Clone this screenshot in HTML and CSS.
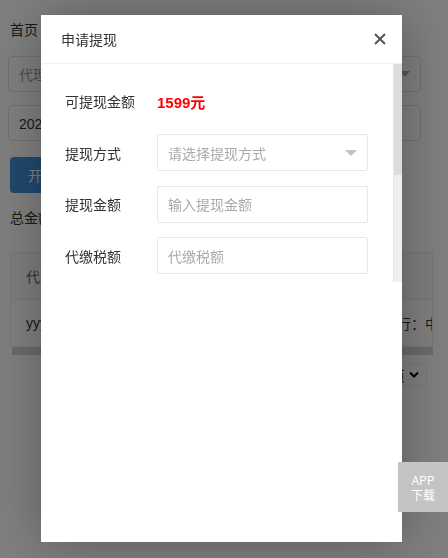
FILE: index.html
```html
<!DOCTYPE html>
<html lang="zh-CN">
<head>
<meta charset="utf-8">
<title>申请提现</title>
<link rel="stylesheet" href="styles.css">
</head>
<body>
<div class="page">
  <div class="crumb">首页</div>
  <div class="field select-lg"><span class="ph">代理商名称</span><span class="caret"></span></div>
  <div class="field date">2021-01-01 至 2021-12-31</div>
  <button class="btn">开始查询</button>
  <div class="total">总金额：1599元</div>
  <div class="table">
    <div class="tr th"><div class="td c1">代理商名称</div></div>
    <div class="tr"><div class="td c1">yyyy-MM-dd HH:mm</div><div class="td c2">开户行：中国银行</div></div>
  </div>
  <div class="hscroll"></div>
  <div class="pager">
    <div class="limit">10 条/页
      <svg class="chev" width="10" height="7" viewBox="0 0 10 7"><path d="M1 1.5 L5 5.5 L9 1.5" fill="none" stroke="#000" stroke-width="2"/></svg>
    </div>
  </div>
</div>

<div class="shade"></div>

<div class="layer">
  <div class="layer-title">
    <span>申请提现</span>
    <svg class="close" width="12" height="12" viewBox="0 0 12 12"><path d="M1 1 L11 11 M11 1 L1 11" stroke="#555" stroke-width="2" fill="none"/></svg>
  </div>
  <div class="layer-body">
    <div class="layer-content">
      <div class="row"><span class="lbl">可提现金额</span><span class="amount">1599元</span></div>
      <div class="row"><span class="lbl">提现方式</span><div class="input select"><span class="ph">请选择提现方式</span><span class="tri"></span></div></div>
      <div class="row"><span class="lbl">提现金额</span><input class="input" placeholder="输入提现金额"></div>
      <div class="row"><span class="lbl">代缴税额</span><input class="input" placeholder="代缴税额"></div>
    </div>
    <div class="vscroll"><div class="thumb"></div></div>
  </div>
</div>

<div class="app-dl">APP<br>下载</div>
</body>
</html>
```

FILE: styles.css
```css
html, body {
  margin: 0;
  padding: 0;
  height: 558px;
  overflow: hidden;
}
body {
  font-family: "Liberation Sans", "Noto Sans CJK SC", sans-serif;
  font-size: 14px;
  color: #333;
  background: #fff;
}

/* underlying page */
.page {
  padding: 20px 0 0 8px;
  width: 440px;
}
.crumb {
  line-height: 20px;
  padding-left: 2px;
}
.field {
  box-sizing: border-box;
  width: 413px;
  height: 36px;
  border: 1px solid #e2e2e2;
  border-radius: 4px;
  padding: 0 10px;
  display: flex;
  align-items: center;
  justify-content: space-between;
}
.select-lg { margin-top: 16px; }
.select-lg .ph { color: #999; }
.caret {
  width: 0; height: 0;
  border: 5px solid transparent;
  border-top: 6px solid #aaa;
  border-bottom: 0;
}
.date { margin-top: 13px; color: #333; }
.btn {
  display: block;
  margin: 16px 0 0 2px;
  height: 36px;
  padding: 0 18px;
  border: 0;
  border-radius: 4px;
  background: #4192dc;
  color: #fff;
  font: inherit;
}
.total {
  margin: 15px 0 0 2px;
  line-height: 20px;
}
.table {
  margin: 24px 0 0 2px;
  width: 423px;
  box-sizing: border-box;
  border: 1px solid #ececec;
  overflow: hidden;
}
.tr {
  display: flex;
  height: 46px;
  align-items: center;
  white-space: nowrap;
}
.tr.th { border-bottom: 1px solid #ececec; background: #fafafa; color: #666; }
.td { padding-left: 15px; box-sizing: border-box; }
.c1 { width: 343px; flex: none; }
.c2 { flex: none; }
.hscroll {
  margin-left: 4px;
  width: 421px;
  height: 8px;
  background: #d6d6d6;
}
.pager {
  display: flex;
  justify-content: flex-end;
  padding-right: 21px;
  margin-top: 8px;
}
.limit {
  box-sizing: border-box;
  height: 23px;
  border: 1px solid #eee;
  border-radius: 2px;
  padding: 0 7px 0 8px;
  display: flex;
  align-items: center;
  gap: 4px;
  font-size: 14px;
}

/* shade and layer */
.shade {
  position: fixed;
  inset: 0;
  background: rgba(0, 0, 0, 0.5);
}
.layer {
  position: fixed;
  left: 41px;
  top: 15px;
  width: 361px;
  height: 527px;
  background: #fff;
  box-shadow: 1px 1px 50px rgba(0, 0, 0, 0.3);
  display: flex;
  flex-direction: column;
}
.layer-title {
  box-sizing: border-box;
  height: 49px;
  border-bottom: 1px solid #f0f0f0;
  padding: 0 16px 0 20px;
  display: flex;
  align-items: center;
  justify-content: space-between;
  font-family: "Noto Sans CJK SC", sans-serif;
  font-size: 14px;
  color: #333;
}
.layer-body {
  height: 218px;
  display: flex;
}
.layer-content {
  flex: 1;
  padding: 18.5px 0 0 24px;
}
.row {
  display: flex;
  align-items: center;
  height: 37px;
  margin-bottom: 14.5px;
}
.lbl {
  width: 92px;
  flex: none;
  font-family: "Noto Sans CJK SC", sans-serif;
  color: #333;
}
.amount {
  color: #f00;
  font-weight: bold;
  font-size: 15px;
}
.input {
  box-sizing: border-box;
  width: 211px;
  height: 37px;
  border: 1px solid #e6e6e6;
  border-radius: 2px;
  padding: 0 10px;
  font-family: "Noto Sans CJK SC", sans-serif;
  font-size: 14px;
  color: #333;
  outline: none;
  background: #fff;
}
.input::placeholder { color: #aaa; }
.select {
  display: flex;
  align-items: center;
  justify-content: space-between;
}
.select .ph { color: #aaa; }
.tri {
  width: 0; height: 0;
  border: 6px solid transparent;
  border-top-color: #c2c2c2;
  border-bottom: 0;
  margin-top: 1px;
}
.vscroll {
  width: 9px;
  box-sizing: border-box;
  border-left: 1px solid #e4e4e4;
  background: #efefef;
}
.thumb {
  height: 111px;
  background: #dcdcdc;
}

.app-dl {
  position: fixed;
  right: 0;
  top: 462px;
  width: 50px;
  height: 50px;
  box-sizing: border-box;
  padding-top: 10px;
  background: #c4c4c4;
  color: #fff;
  font-family: "Noto Sans CJK SC", sans-serif;
  font-size: 12px;
  line-height: 15px;
  text-align: center;
}
```
